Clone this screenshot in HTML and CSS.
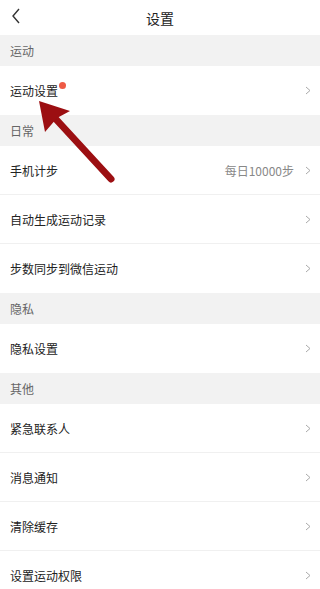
FILE: index.html
```html
<!DOCTYPE html>
<html lang="zh-CN">
<head>
    <meta charset="UTF-8">
    <meta name="viewport" content="width=device-width, initial-scale=1.0">
    <title>设置</title>
    <link rel="stylesheet" href="styles.css">
</head>
<body>
    <div class="page">
        <header class="topbar">
            <svg class="back" width="10" height="16" viewBox="0 0 10 16">
                <path d="M8 1 L2 8 L8 15" fill="none" stroke="#333" stroke-width="1.4"/>
            </svg>
            <h1>设置</h1>
        </header>

        <div class="section">运动</div>
        <div class="group">
            <div class="row">
                <span class="label dot">运动设置</span>
                <span class="more"><svg class="chev" width="6" height="9" viewBox="0 0 6 9"><path d="M1 1 L5 4.5 L1 8" fill="none" stroke="#aaa" stroke-width="1"/></svg></span>
            </div>
        </div>

        <div class="section">日常</div>
        <div class="group">
            <div class="row">
                <span class="label">手机计步</span>
                <span class="more"><span class="value">每日10000步</span><svg class="chev" width="6" height="9" viewBox="0 0 6 9"><path d="M1 1 L5 4.5 L1 8" fill="none" stroke="#aaa" stroke-width="1"/></svg></span>
            </div>
            <div class="row">
                <span class="label">自动生成运动记录</span>
                <span class="more"><svg class="chev" width="6" height="9" viewBox="0 0 6 9"><path d="M1 1 L5 4.5 L1 8" fill="none" stroke="#aaa" stroke-width="1"/></svg></span>
            </div>
            <div class="row">
                <span class="label">步数同步到微信运动</span>
                <span class="more"><svg class="chev" width="6" height="9" viewBox="0 0 6 9"><path d="M1 1 L5 4.5 L1 8" fill="none" stroke="#aaa" stroke-width="1"/></svg></span>
            </div>
        </div>

        <div class="section">隐私</div>
        <div class="group">
            <div class="row">
                <span class="label">隐私设置</span>
                <span class="more"><svg class="chev" width="6" height="9" viewBox="0 0 6 9"><path d="M1 1 L5 4.5 L1 8" fill="none" stroke="#aaa" stroke-width="1"/></svg></span>
            </div>
        </div>

        <div class="section">其他</div>
        <div class="group">
            <div class="row">
                <span class="label">紧急联系人</span>
                <span class="more"><svg class="chev" width="6" height="9" viewBox="0 0 6 9"><path d="M1 1 L5 4.5 L1 8" fill="none" stroke="#aaa" stroke-width="1"/></svg></span>
            </div>
            <div class="row">
                <span class="label">消息通知</span>
                <span class="more"><svg class="chev" width="6" height="9" viewBox="0 0 6 9"><path d="M1 1 L5 4.5 L1 8" fill="none" stroke="#aaa" stroke-width="1"/></svg></span>
            </div>
            <div class="row">
                <span class="label">清除缓存</span>
                <span class="more"><svg class="chev" width="6" height="9" viewBox="0 0 6 9"><path d="M1 1 L5 4.5 L1 8" fill="none" stroke="#aaa" stroke-width="1"/></svg></span>
            </div>
            <div class="row">
                <span class="label">设置运动权限</span>
                <span class="more"><svg class="chev" width="6" height="9" viewBox="0 0 6 9"><path d="M1 1 L5 4.5 L1 8" fill="none" stroke="#aaa" stroke-width="1"/></svg></span>
            </div>
        </div>

        <!-- стрелка-подсказка поверх списка -->
        <svg class="pointer" width="320" height="200" viewBox="0 0 320 200">
            <line x1="53" y1="116" x2="111" y2="179" stroke="#9c0f12" stroke-width="7" stroke-linecap="round"/>
            <polygon points="39,101 70,111 57,118 45,132" fill="#9c0f12"/>
        </svg>
    </div>
</body>
</html>
```

FILE: styles.css
```css
body {
    margin: 0;
    font-family: "Noto Sans CJK SC", "Noto Sans", sans-serif;
    background: #fff;
    color: #333;
}

.page {
    position: relative;
    width: 320px;
    height: 589px;
    overflow: hidden;
}

.topbar {
    height: 35px;
    display: flex;
    align-items: center;
    justify-content: center;
    position: relative;
}

.topbar h1 {
    margin: 0;
    font-size: 14px;
    font-weight: normal;
    color: #222;
}

.back {
    position: absolute;
    left: 11px;
    top: 8px;
}

.section {
    height: 31px;
    background: #f2f2f2;
    color: #666;
    font-size: 12px;
    padding-left: 10px;
    display: flex;
    align-items: center;
}

.row {
    height: 49px;
    box-sizing: border-box;
    padding: 0 9px 0 10px;
    display: flex;
    align-items: center;
    justify-content: space-between;
    border-bottom: 1px solid #f0f0f0;
    font-size: 12px;
}

.row:last-child {
    border-bottom: none;
}

.label {
    position: relative;
    color: #222;
}

/* красная точка у пункта */
.label.dot::after {
    content: "";
    position: absolute;
    right: -8px;
    top: 0;
    width: 7px;
    height: 7px;
    border-radius: 50%;
    background: #ee5a45;
}

.more {
    display: flex;
    align-items: center;
}

.value {
    color: #888;
    margin-right: 11px;
}

.chev {
    display: block;
}

.pointer {
    position: absolute;
    left: 0;
    top: 0;
}
```
